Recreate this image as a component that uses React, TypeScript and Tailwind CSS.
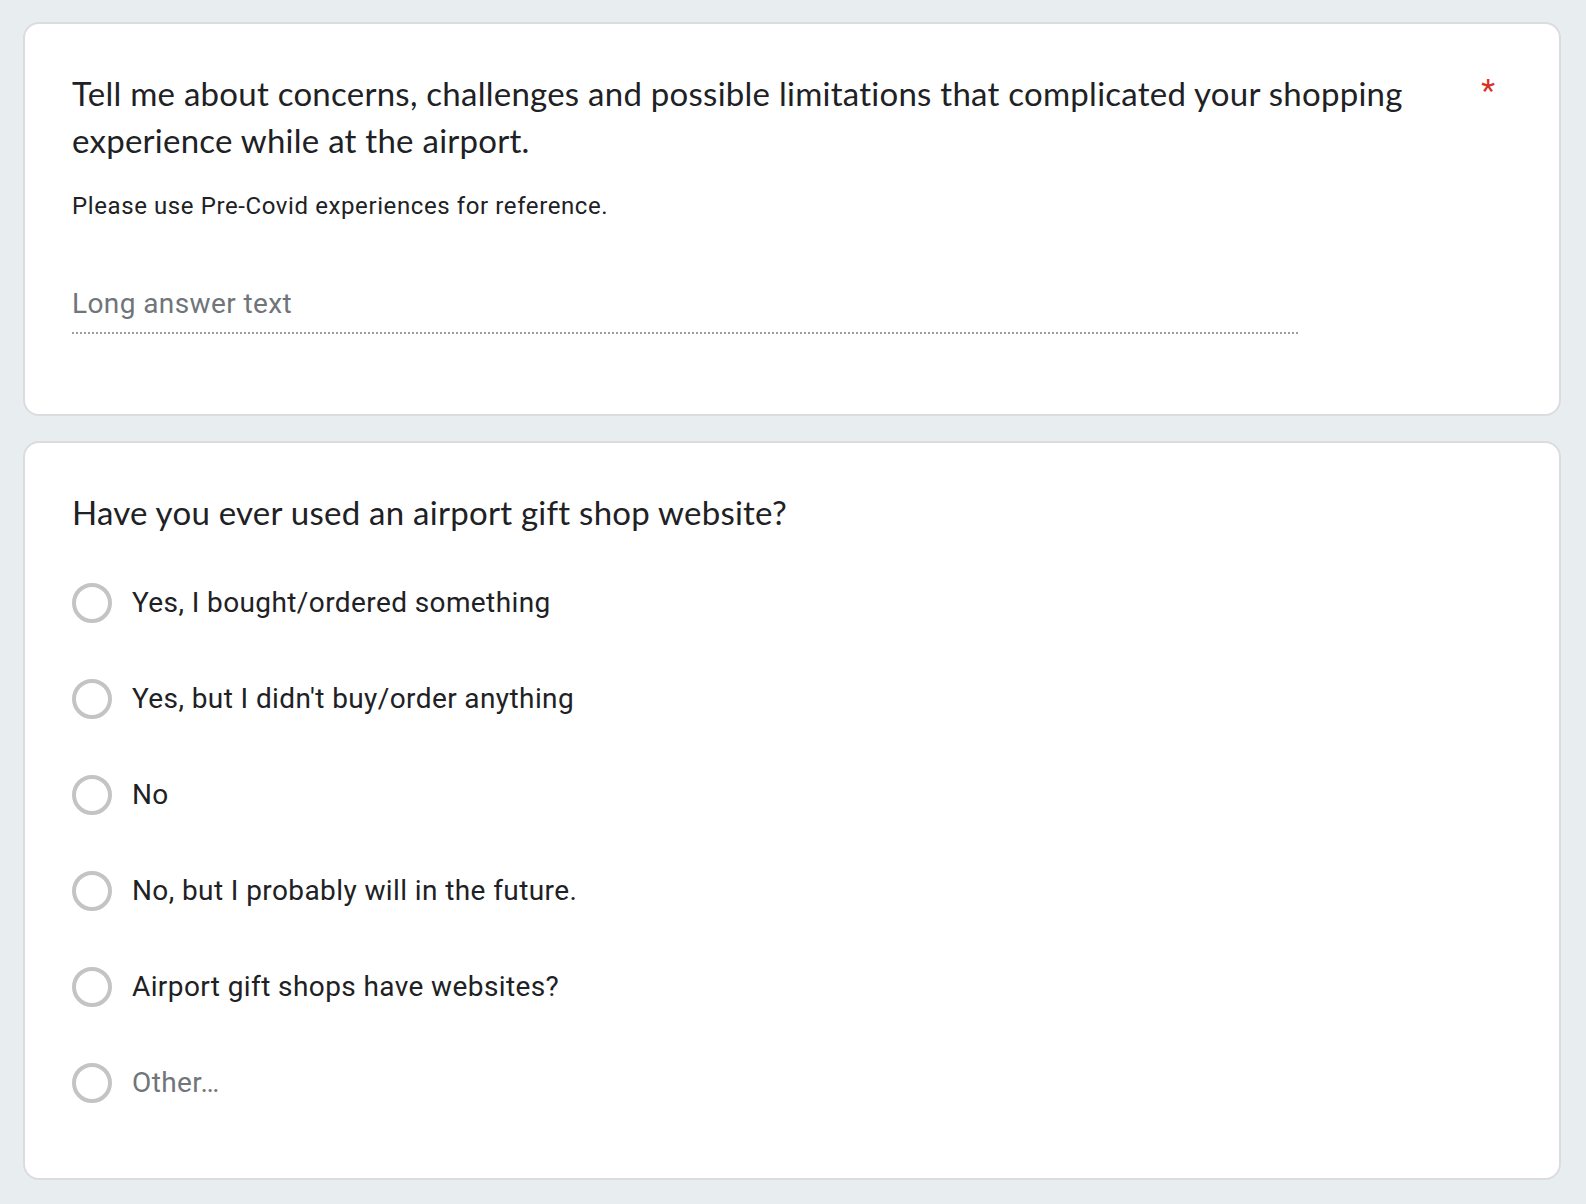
import React from 'react';

type Option = {
  id: number;
  label: string;
  isOther?: boolean;
};

const options: Option[] = [
  { id: 1, label: 'Yes, I bought/ordered something' },
  { id: 2, label: "Yes, but I didn't buy/order anything" },
  { id: 3, label: 'No' },
  { id: 4, label: 'No, but I probably will in the future.' },
  { id: 5, label: 'Airport gift shops have websites?' },
  { id: 6, label: 'Other…', isOther: true },
];

const titleFont =
  "text-[33px] leading-[47px] tracking-[0.25px] text-[#202124] [font-family:Lato,'Open_Sans',sans-serif]";

const App = (): JSX.Element => {
  return (
    <div className="min-h-screen bg-[#e8edf0] pt-[22px] pl-[23px] pr-[25px] pb-6">
      <div className="flex flex-col gap-[25px]">
        <section className="rounded-2xl border-2 border-[#dadce0] bg-white pt-[46px] pl-[47px] pr-[47px] pb-[80px]">
          <div className="flex items-start">
            <h2 className={`flex-1 pr-[50px] ${titleFont}`}>
              Tell me about concerns, challenges and possible limitations that
              complicated your shopping experience while at the airport.
            </h2>
            <span className="mr-[17px] self-start text-[32px] leading-[40px] text-[#d93025] [font-family:Roboto,sans-serif]">
              *
            </span>
          </div>
          <p className="mt-[27px] text-[24px] leading-[30px] tracking-[0.6px] text-[#202124] [font-family:Roboto,sans-serif]">
            Please use Pre-Covid experiences for reference.
          </p>
          <div className="mt-[65px] w-[1226px] border-b-2 border-dotted border-[#9aa0a6] pb-[10px]">
            <span className="text-[28px] leading-[36px] tracking-[0.4px] text-[#70757a] [font-family:Roboto,sans-serif]">
              Long answer text
            </span>
          </div>
        </section>

        <section className="rounded-2xl border-2 border-[#dadce0] bg-white pt-[46px] pl-[47px] pr-[47px] pb-[75px]">
          <h2 className={titleFont}>
            Have you ever used an airport gift shop website?
          </h2>
          <div className="mt-[47px] flex flex-col gap-[56px]">
            {options.map((opt) => (
              <label key={opt.id} className="flex items-center">
                <span className="h-10 w-10 shrink-0 rounded-full border-4 border-[#c4c4c4]" />
                <span
                  className={
                    opt.isOther
                      ? 'ml-5 text-[28px] leading-[40px] tracking-[0.4px] text-[#70757a] [font-family:Roboto,sans-serif]'
                      : 'ml-5 text-[28px] leading-[40px] tracking-[0.4px] text-[#202124] [font-family:Roboto,sans-serif]'
                  }
                >
                  {opt.label}
                </span>
              </label>
            ))}
          </div>
        </section>
      </div>
    </div>
  );
};

export default App;
